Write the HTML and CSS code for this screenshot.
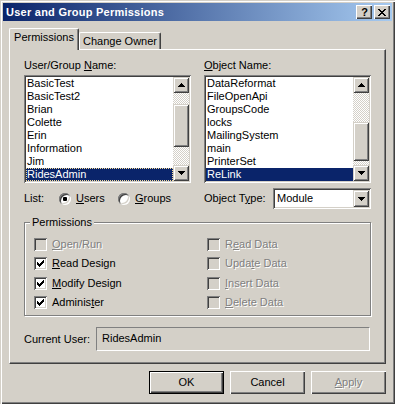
FILE: index.html
```html
<!DOCTYPE html>
<html>
<head>
<meta charset="utf-8">
<title>User and Group Permissions</title>
<link rel="stylesheet" href="styles.css">
</head>
<body>
<svg class="defs" width="0" height="0">
  <defs>
    <g id="up"><rect x="3" y="0" width="1" height="1"/><rect x="2" y="1" width="3" height="1"/><rect x="1" y="2" width="5" height="1"/><rect x="0" y="3" width="7" height="1"/></g>
    <g id="down"><rect x="0" y="0" width="7" height="1"/><rect x="1" y="1" width="5" height="1"/><rect x="2" y="2" width="3" height="1"/><rect x="3" y="3" width="1" height="1"/></g>
    <g id="check"><rect x="0" y="2" width="1" height="3"/><rect x="1" y="3" width="1" height="3"/><rect x="2" y="4" width="1" height="3"/><rect x="3" y="3" width="1" height="3"/><rect x="4" y="2" width="1" height="3"/><rect x="5" y="1" width="1" height="3"/><rect x="6" y="0" width="1" height="3"/></g>
  </defs>
</svg>
<div class="window">
  <div class="titlebar">
    <span class="title">User and Group Permissions</span>
    <div class="tbtns">
      <span class="tbtn help">?</span>
      <span class="tbtn close"><svg width="8" height="7" viewBox="0 0 8 7" shape-rendering="crispEdges"><rect x="0" y="0" width="2" height="1"/><rect x="6" y="0" width="2" height="1"/><rect x="1" y="1" width="2" height="1"/><rect x="5" y="1" width="2" height="1"/><rect x="2" y="2" width="4" height="1"/><rect x="3" y="3" width="2" height="1"/><rect x="2" y="4" width="4" height="1"/><rect x="1" y="5" width="2" height="1"/><rect x="5" y="5" width="2" height="1"/><rect x="0" y="6" width="2" height="1"/><rect x="6" y="6" width="2" height="1"/></svg></span>
    </div>
  </div>
  <div class="client">
    <div class="tabs">
      <div class="tab active">Permissions</div>
      <div class="tab">Change Owner</div>
    </div>
    <div class="panel">
      <div class="cols">
        <div class="col">
          <div class="lbl">User/Group <u>N</u>ame:</div>
          <div class="listbox">
            <div class="items">
              <div class="item">BasicTest</div>
              <div class="item">BasicTest2</div>
              <div class="item">Brian</div>
              <div class="item">Colette</div>
              <div class="item">Erin</div>
              <div class="item">Information</div>
              <div class="item">Jim</div>
              <div class="item sel focus">RidesAdmin</div>
            </div>
            <div class="vscroll">
              <div class="sbtn"><svg width="7" height="4" shape-rendering="crispEdges"><use href="#up"/></svg></div>
              <div class="track"><div class="thumb" style="margin-top:11px;height:43px"></div></div>
              <div class="sbtn"><svg width="7" height="4" shape-rendering="crispEdges"><use href="#down"/></svg></div>
            </div>
          </div>
          <div class="ctrlrow">
            <span class="rowlbl">List:</span>
            <span class="opt first"><span class="radio on"></span><span><u>U</u>sers</span></span>
            <span class="opt"><span class="radio"></span><span><u>G</u>roups</span></span>
          </div>
        </div>
        <div class="col">
          <div class="lbl"><u>O</u>bject Name:</div>
          <div class="listbox">
            <div class="items">
              <div class="item">DataReformat</div>
              <div class="item">FileOpenApi</div>
              <div class="item">GroupsCode</div>
              <div class="item">locks</div>
              <div class="item">MailingSystem</div>
              <div class="item">main</div>
              <div class="item">PrinterSet</div>
              <div class="item sel">ReLink</div>
            </div>
            <div class="vscroll">
              <div class="sbtn"><svg width="7" height="4" shape-rendering="crispEdges"><use href="#up"/></svg></div>
              <div class="track"><div class="thumb" style="margin-top:29px;height:39px"></div></div>
              <div class="sbtn"><svg width="7" height="4" shape-rendering="crispEdges"><use href="#down"/></svg></div>
            </div>
          </div>
          <div class="ctrlrow">
            <span class="typelbl">Object T<u>y</u>pe:</span>
            <div class="combo">
              <span class="combotext">Module</span>
              <div class="sbtn dd"><svg width="7" height="4" shape-rendering="crispEdges"><use href="#down"/></svg></div>
            </div>
          </div>
        </div>
      </div>
      <div class="group">
        <span class="legend">Permissions</span>
        <div class="checks">
          <div class="chk disabled"><span class="box"></span><span><u>O</u>pen/Run</span></div>
          <div class="chk disabled"><span class="box"></span><span>R<u>e</u>ad Data</span></div>
          <div class="chk"><span class="box"><svg width="7" height="7" shape-rendering="crispEdges"><use href="#check"/></svg></span><span><u>R</u>ead Design</span></div>
          <div class="chk disabled"><span class="box"></span><span>Upda<u>t</u>e Data</span></div>
          <div class="chk"><span class="box"><svg width="7" height="7" shape-rendering="crispEdges"><use href="#check"/></svg></span><span><u>M</u>odify Design</span></div>
          <div class="chk disabled"><span class="box"></span><span><u>I</u>nsert Data</span></div>
          <div class="chk"><span class="box"><svg width="7" height="7" shape-rendering="crispEdges"><use href="#check"/></svg></span><span>Adminis<u>t</u>er</span></div>
          <div class="chk disabled"><span class="box"></span><span><u>D</u>elete Data</span></div>
        </div>
      </div>
      <div class="userrow">
        <span class="userlbl">Current User:</span>
        <div class="userfield">RidesAdmin</div>
      </div>
    </div>
    <div class="buttons">
      <div class="btn default">OK</div>
      <div class="btn">Cancel</div>
      <div class="btn disabled"><span><u>A</u>pply</span></div>
    </div>
  </div>
</div>
</body>
</html>
```

FILE: styles.css
```css
* { box-sizing: border-box; }
html, body { margin: 0; padding: 0; }
body {
  width: 395px;
  height: 404px;
  overflow: hidden;
  background: #d4d0c8;
  font-family: "Liberation Sans", Arial, sans-serif;
  font-size: 11px;
  line-height: 13px;
  color: #000;
}
u { text-decoration: underline; text-underline-offset: 1px; }
.defs { position: absolute; width: 0; height: 0; }

.window {
  width: 395px;
  height: 404px;
  padding: 3px;
  background: #d4d0c8;
  box-shadow: inset 1px 1px 0 #d4d0c8, inset 2px 2px 0 #fff, inset -1px -1px 0 #404040, inset -2px -2px 0 #808080;
}

.titlebar {
  height: 18px;
  display: flex;
  align-items: center;
  justify-content: space-between;
  padding: 0 2px 0 3px;
  background: linear-gradient(to right, #0a246a, #a6caf0);
}
.title { color: #fff; font-weight: bold; font-size: 11px; line-height: 13px; letter-spacing: 0.25px; }
.tbtns { display: flex; gap: 2px; }
.tbtn {
  width: 16px;
  height: 14px;
  background: #d4d0c8;
  box-shadow: inset 1px 1px 0 #fff, inset -1px -1px 0 #404040, inset -2px -2px 0 #808080;
  display: flex;
  align-items: center;
  justify-content: center;
}
.tbtn.help { font-weight: bold; font-size: 11px; line-height: 14px; padding-left: 1px; }
.tbtn.close svg { margin-left: -1px; fill: #000; }

.client { padding: 7px 6px 0 6px; }

.tabs { display: flex; align-items: flex-end; height: 21px; }
.tab {
  width: 82px;
  height: 17px;
  border-top: 1px solid #fff;
  border-left: 1px solid #fff;
  border-right: 1px solid #404040;
  border-radius: 2px 2px 0 0;
  box-shadow: inset -1px 0 0 #808080;
  text-align: center;
  padding-top: 2px;
}
.tab.active {
  width: 70px;
  height: 22px;
  margin-bottom: -1px;
  position: relative;
  z-index: 1;
  background: #d4d0c8;
  padding-top: 2px;
}

.panel {
  height: 315px;
  border-top: 1px solid #fff;
  border-left: 1px solid #fff;
  border-right: 1px solid #404040;
  border-bottom: 1px solid #404040;
  box-shadow: inset -1px -1px 0 #808080;
  padding: 9px 13px 0 14px;
}

.cols { display: flex; gap: 13px; }
.col { width: 167px; }
.lbl { height: 13px; margin-bottom: 3px; }

.listbox {
  height: 108px;
  padding: 2px;
  background: #fff;
  box-shadow: inset 1px 1px 0 #808080, inset -1px -1px 0 #fff, inset 2px 2px 0 #404040, inset -2px -2px 0 #d4d0c8;
  display: flex;
}
.items { flex: 1; }
.item { height: 13px; padding-left: 1px; white-space: nowrap; }
.item.sel { background: #0a246a; color: #fff; }
.item.focus { outline: 1px dotted #f5db95; outline-offset: -1px; }

.vscroll { width: 16px; display: flex; flex-direction: column; }
.sbtn {
  width: 16px;
  height: 16px;
  background: #d4d0c8;
  box-shadow: inset 1px 1px 0 #d4d0c8, inset -1px -1px 0 #404040, inset 2px 2px 0 #fff, inset -2px -2px 0 #808080;
  display: flex;
  align-items: center;
  justify-content: center;
  flex: none;
}
.sbtn svg { fill: #000; }
.track {
  flex: 1;
  background: repeating-conic-gradient(#fff 0 25%, #d4d0c8 0 50%) 0 0 / 2px 2px;
}
.thumb {
  background: #d4d0c8;
  box-shadow: inset 1px 1px 0 #d4d0c8, inset -1px -1px 0 #404040, inset 2px 2px 0 #fff, inset -2px -2px 0 #808080;
}

.ctrlrow { display: flex; align-items: center; height: 21px; margin-top: 5px; }
.rowlbl { width: 35px; }
.opt { display: flex; align-items: center; gap: 5px; }
.opt.first { width: 59px; }
.radio {
  width: 12px;
  height: 12px;
  border-radius: 50%;
  background: #fff;
  box-shadow: inset 1px 1px 0 #808080, inset -1px -1px 0 #fff, inset 2px 2px 0 #404040, inset -2px -2px 0 #d4d0c8;
  display: flex;
  align-items: center;
  justify-content: center;
}
.radio.on::after { content: ""; width: 4px; height: 4px; border-radius: 1px; background: #000; }

.typelbl { width: 69px; }
.combo {
  width: 98px;
  height: 21px;
  padding: 2px;
  background: #fff;
  box-shadow: inset 1px 1px 0 #808080, inset -1px -1px 0 #fff, inset 2px 2px 0 #404040, inset -2px -2px 0 #d4d0c8;
  display: flex;
  align-items: center;
  justify-content: space-between;
}
.combotext { padding-left: 2px; }
.sbtn.dd { height: 17px; }

.group {
  position: relative;
  margin-top: 13px;
  height: 94px;
  width: 347px;
  border: 1px solid #808080;
  box-shadow: inset 1px 1px 0 #fff, 1px 1px 0 #fff;
  padding: 15px 0 0 9px;
}
.legend {
  position: absolute;
  left: 5px;
  top: -7px;
  padding: 0 2px;
  background: #d4d0c8;
}
.checks {
  display: grid;
  grid-template-columns: 173px auto;
  grid-template-rows: 19px 20px 19px 13px;
}
.chk { display: flex; align-items: flex-start; gap: 5px; height: 13px; }
.box {
  width: 13px;
  height: 13px;
  background: #fff;
  box-shadow: inset 1px 1px 0 #808080, inset -1px -1px 0 #fff, inset 2px 2px 0 #404040, inset -2px -2px 0 #d4d0c8;
  display: flex;
  align-items: center;
  justify-content: center;
  flex: none;
}
.box svg { fill: #000; }
.chk.disabled .box { background: #d4d0c8; }
.chk.disabled span:last-child, .btn.disabled span { color: #808080; text-shadow: 1px 1px 0 #fff; }

.userrow { display: flex; align-items: center; margin-top: 11px; }
.userlbl { width: 72px; }
.userfield {
  width: 274px;
  height: 24px;
  border-top: 1px solid #808080;
  border-left: 1px solid #808080;
  border-right: 1px solid #fff;
  border-bottom: 1px solid #fff;
  padding: 4px 0 0 5px;
}

.buttons { display: flex; justify-content: flex-end; gap: 6px; margin-top: 7px; }
.btn {
  width: 75px;
  height: 23px;
  background: #d4d0c8;
  box-shadow: inset 1px 1px 0 #fff, inset -1px -1px 0 #404040, inset -2px -2px 0 #808080;
  display: flex;
  align-items: center;
  justify-content: center;
}
.btn.default {
  border: 1px solid #000;
}
```
